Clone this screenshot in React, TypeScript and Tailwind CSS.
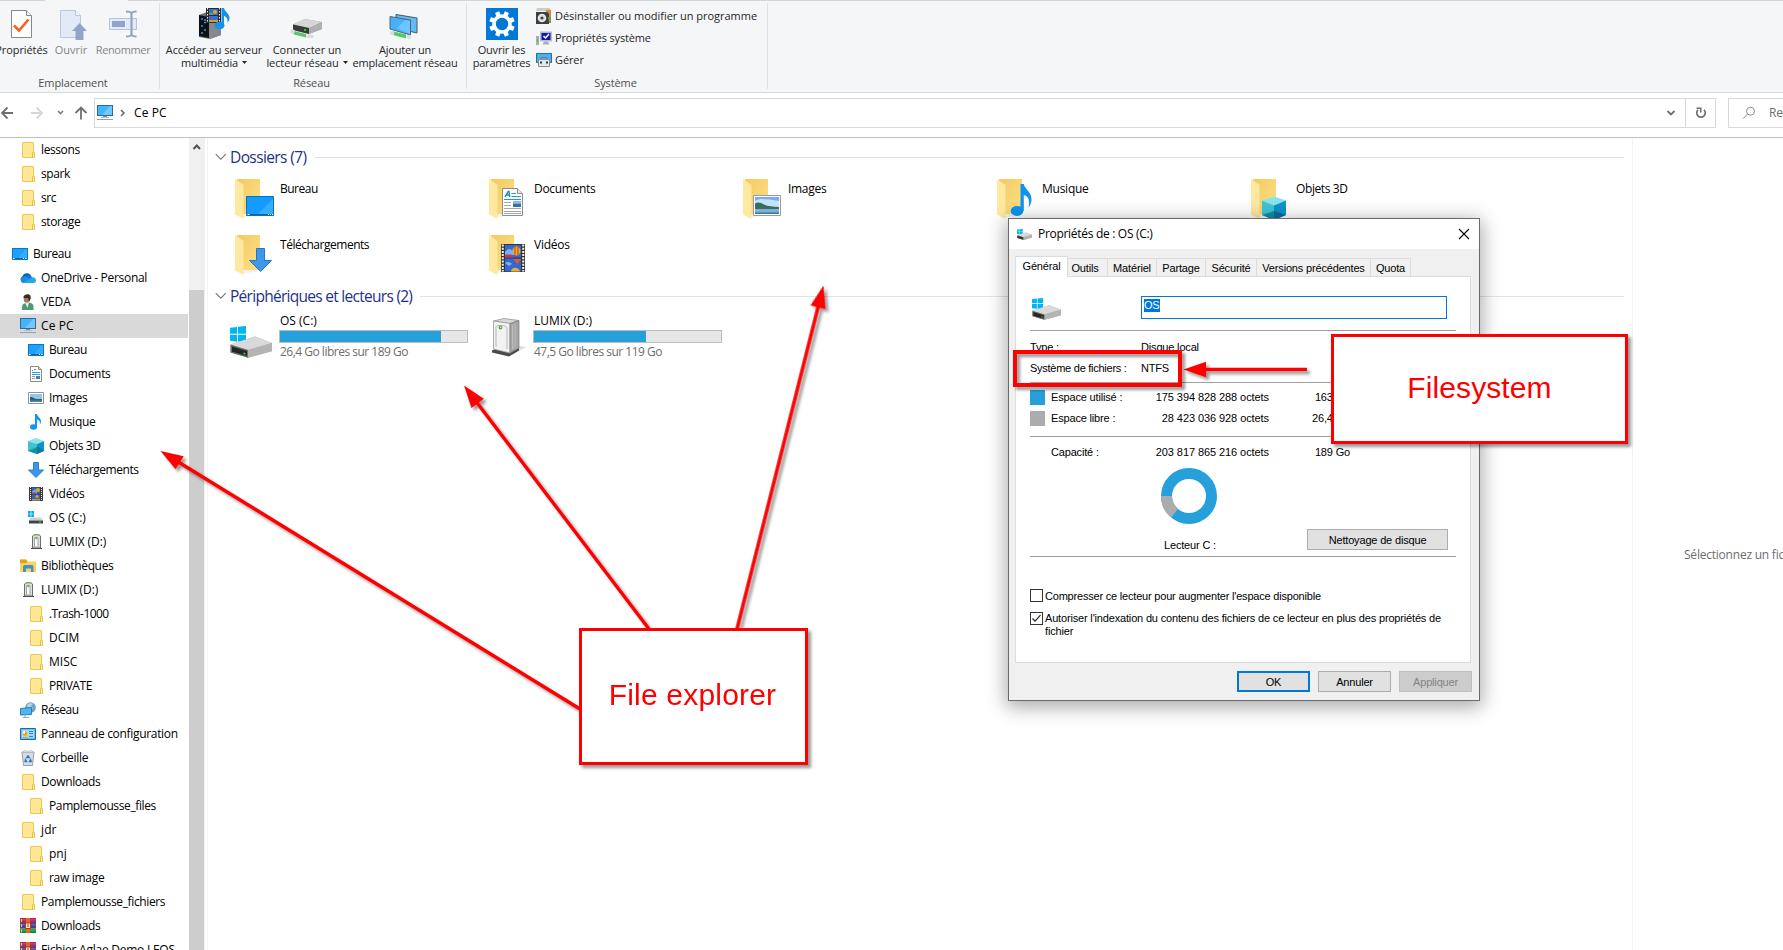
import type { ReactNode } from 'react';

/* ---------- small (16px) icons ---------- */

const Svg16 = ({ children }: { children: ReactNode }) => (
  <svg width="16" height="16" viewBox="0 0 16 16" className="shrink-0">{children}</svg>
);

const FolderIcon = () => (
  <Svg16>
    <path d="M2.5.5h11v10h1v5h-12z" fill="#ffe795" stroke="#eac757" />
    <path d="M12.5 15.5v-4.5l1-1" fill="none" stroke="#e5bd45" />
  </Svg16>
);

const DesktopIcon = () => (
  <Svg16>
    <rect x=".5" y="2.5" width="15" height="11" fill="#1aa0ff" stroke="#0b77bd" />
    <path d="M6 12 14 3h1v9z" fill="#36adff" />
    <path d="M1 12.5h14" stroke="#0a69ad" />
    <path d="M1 12.5h1.5M11 12.5h1M13 12.5h1.5" stroke="#fff" />
  </Svg16>
);

const CloudIcon = () => (
  <Svg16>
    <path d="M3.5 12.5A3.4 3.4 0 0 1 2.3 6.2 5 5 0 0 1 11 5.4l-5 7z" fill="#0364b8" />
    <path d="M4.5 6.5C7 4.500 10.500 5 12 7.200l2 3-9 2z" fill="#0f78d4" />
    <path d="M3.400 13A3.300 3.300 0 0 1 3.500 6.500c1.500-.3 3 .2 4 .8l6 3.700-1.500 2z" fill="#1490df" />
    <path d="M3.500 13 10.800 8.200A3 3 0 0 1 16 10.400 2.600 2.600 0 0 1 13.500 13z" fill="#28a8ea" />
  </Svg16>
);

const UserIcon = () => (
  <Svg16>
    <path d="M2 16V13c0-2 1-3.600 4-4l3-.5c3 .5 4.500 2 4.500 4V16z" fill="#4f9a74" />
    <path d="M5 8.500 7.500 14 9 8.500z" fill="#e9efe9" />
    <ellipse cx="6.700" cy="5" rx="3" ry="3.800" fill="#a8775a" />
    <path d="M3.500 3C4 0 9.500-.8 10.500 2c.6 2 0 4-1.300 5.500L8 4 3.500 4z" fill="#3b2b26" />
  </Svg16>
);

const PcIcon = () => (
  <Svg16>
    <rect x=".5" y=".5" width="15" height="10" fill="#45b4ff" stroke="#2a6e96" />
    <path d="M5 10 13 1h2v9z" fill="#72c8ff" />
    <path d="M6 11.500h4" stroke="#8a9299" />
    <path d="M4 12.500h8" stroke="#b4bcc3" />
    <path d="M0 14.500h16" stroke="#8fa3b3" />
  </Svg16>
);

const DocIcon = () => (
  <Svg16>
    <path d="M2.500.5h8l3 3v12h-11z" fill="#fff" stroke="#8b8b8b" />
    <path d="M10.500.5v3h3" fill="#ddd" stroke="#8b8b8b" />
    <path d="M4 6.500h8M4 4.500h1M6 3.500h2M4 8.500h8" stroke="#3199dd" />
    <path d="M4 10.500h3M4 12.500h3" stroke="#999" />
    <path d="M8 10h4v3H8z" fill="#4b7fae" />
  </Svg16>
);

const ImageIcon = () => (
  <Svg16>
    <path d="M.5 2.500h15v11H.5z" fill="#fff" stroke="#929292" />
    <path d="M2 4h12v8H2z" fill="#8fc6f2" />
    <path d="M2 7c3-.5 4 2 8 2h4v3H2z" fill="#2f6560" />
    <path d="M2 10.500h12V12H2z" fill="#4a86b6" />
  </Svg16>
);

const MusicIcon = () => (
  <Svg16>
    <ellipse cx="5.500" cy="13" rx="3.500" ry="2.800" fill="#0d96f2" />
    <path d="M7 0h2c.3 3 4.500 4 4 8-.2 1.200-.7 2-1.300 2.600C12.500 7.500 11 6 9 5.500V13H7z" fill="#0d96f2" />
  </Svg16>
);

const CubeIcon = () => (
  <Svg16>
    <path d="M0 3 8 0l8 3-7 3z" fill="#8fe3ea" />
    <path d="M0 3l9 3v10l-9-3z" fill="#45c0cf" />
    <path d="M9 6l7-3v10l-7 3z" fill="#0b94cc" />
    <path d="M0 13l9-4v7z" fill="#0e93a8" />
    <path d="M9 16l7-3-7-5z" fill="#10799f" />
  </Svg16>
);

const DownIcon = () => (
  <Svg16>
    <path d="M5.500.5h5v7.500h5L8 15.500.5 8h5z" fill="#3b97ea" stroke="#2b7fcf" />
  </Svg16>
);

const FilmIcon = () => (
  <Svg16>
    <path d="M1 1h14v14H1z" fill="#3b3b3b" />
    <path d="M2.500 1v14M13.500 1v14" stroke="#e2e2e2" strokeDasharray="1 1" />
    <path d="M4 1.500h8v6H4zM4 8.500h8v6H4z" fill="#2f62c4" />
    <path d="M4 5.500 7 3l2 2v2.500H4z" fill="#72a2e8" />
    <circle cx="10" cy="4" r="2" fill="#e3a321" />
    <path d="M4 6.500h4v1H4z" fill="#c0392b" />
    <circle cx="9" cy="10.500" r="1.500" fill="#e3a321" />
    <path d="M4 13h8v1.500H4z" fill="#c99a2b" />
  </Svg16>
);

const SmallDriveIcon = () => (
  <Svg16>
    <path d="M0 1h2.700v2.700H0zM3.300 1H6v2.700H3.300zM0 4.300h2.700V7H0zM3.300 4.300H6V7H3.300z" fill="#00adef" />
    <path d="M3 7.500h10l2 3H1z" fill="#cfcfcf" />
    <path d="M1 10.500h14v3H1z" fill="#3e4347" />
    <path d="M11 12h2" stroke="#3fe04a" />
  </Svg16>
);

const UsbIcon = () => (
  <Svg16>
    <path d="M4.500 2 6 .8h5L12.500 2v12h-8z" fill="#dedede" stroke="#6d6d6d" />
    <path d="M6.500 3.500h3.500V13H6.500z" fill="#fafafa" stroke="#999" strokeWidth=".8" />
    <circle cx="8.300" cy="4" r="1.300" fill="#6ac04b" />
    <path d="M3 14.500h11" stroke="#4c4c4c" />
  </Svg16>
);

const LibraryIcon = () => (
  <Svg16>
    <path d="M0 1.500h6l1.500 2H16V14H0z" fill="#ffd155" />
    <path d="M0 1.500h6l1.500 2L6 5H0z" fill="#dda017" />
    <path d="M3 14V8.500L4 7h8.500l1 1.500V14H11v-3.500H6V14z" fill="#3c93d8" />
  </Svg16>
);

const NetworkIcon = () => (
  <Svg16>
    <circle cx="10.500" cy="5.500" r="5.300" fill="#6aa3bf" />
    <path d="M7 3c2-2.500 5-2 6-1l-2 2 2 2-2 3-3-1z" fill="#b5d5e2" />
    <path d="M.5 6.500 11.500 5.500v7l-11 .5z" fill="#4db7f7" stroke="#2f7ba9" />
    <path d="M5 13.500v1.500M3 15.500h6" stroke="#8fa3b3" />
  </Svg16>
);

const PanelIcon = () => (
  <Svg16>
    <path d="M.5 2.500h15v11H.5z" fill="#63bff5" stroke="#1c6a9e" />
    <path d="M2 4h12v8H2z" fill="#a3dafa" />
    <circle cx="5" cy="7.500" r="2.500" fill="#fff" />
    <path d="M5 7.500V5a2.500 2.500 0 1 1-2.500 2.500z" fill="#f0a020" />
    <path d="M9 5.500h4M9 7.500h4M9 10.500h4" stroke="#2b85c4" />
    <path d="M3 11.500h5" stroke="#f0a020" />
  </Svg16>
);

const BinIcon = () => (
  <Svg16>
    <path d="M2 2h12l-1.500 13.500h-9z" fill="#d9dcdf" stroke="#9aa0a5" />
    <path d="M2.500 2 5 .5l3 .8L11 .4 13.500 2z" fill="#f4f4f4" stroke="#b5b5b5" strokeWidth=".6" />
    <path d="m8 5 2 3H6zM5.300 8.500l2 3.500H4.600zM10.700 8.500l1 3.500H8.800z" fill="#2474c6" stroke="#2474c6" strokeWidth=".5" />
  </Svg16>
);

const RarIcon = () => (
  <Svg16>
    <path d="M0 0h16v5H0z" fill="#a52c58" />
    <path d="M0 1h16v1.500H0z" fill="#d23a72" />
    <path d="M0 5h16v5.500H0z" fill="#3e4696" />
    <path d="M0 6h16v1.500H0z" fill="#5c66bb" />
    <path d="M0 10.500h16V15H0z" fill="#1f8a35" />
    <path d="M0 11.500h16V13H0z" fill="#38ab4c" />
    <path d="M6 0h4v15H6z" fill="#e0691f" />
    <path d="M5.500 5h5v5.500h-5z" fill="#f5e8df" stroke="#b83010" />
    <path d="M7.500 6h1v3h-1z" fill="#b83010" />
    <path d="M1.500 1v3M1.500 6v3M1.500 11.500v3" stroke="#e7c94b" />
  </Svg16>
);

/* ---------- ribbon icons ---------- */

const PropertiesIcon = () => (
  <svg width="32" height="32" viewBox="0 0 32 32" className="-translate-x-px">
    <path d="M6.500 2.500h15l5 5v22h-20z" fill="#fff" stroke="#878787" />
    <path d="M21.500 2.500v5h5" fill="#f0f0f0" stroke="#878787" />
    <path d="m9 17.500 5 5 9.500-11" fill="none" stroke="#f3641c" strokeWidth="2.600" />
  </svg>
);

const OpenIcon = () => (
  <svg width="32" height="32" viewBox="0 0 32 32">
    <path d="M5.500 2.500h15l5 5v22h-20z" fill="#e3eaf7" stroke="#bac7de" />
    <path d="M20.500 2.500v5h5" fill="#f2f6fc" stroke="#bac7de" />
    <path d="m24.500 15 7.500 8h-3.500v9h-8v-9H17z" fill="#93a5c4" />
  </svg>
);

const RenameIcon = () => (
  <svg width="32" height="32" viewBox="0 0 32 32">
    <path d="M2.500 10.500h27v11h-27z" fill="#e4ebf8" stroke="#b4c3de" />
    <path d="M5 13h13v6H5z" fill="#93a5c4" />
    <path d="M19 3.500c3 0 5 .5 5.500 2 .5-1.500 2-2 5-2M24.500 5v22M19 28.500c3 0 5-.5 5.500-2 .5 1.500 2 2 5 2" fill="none" stroke="#93a5c4" strokeWidth="2.200" />
  </svg>
);

const MediaServerIcon = () => (
  <svg width="32" height="32" viewBox="0 0 32 32">
    <path d="M1 7 9 4l14 3v20l-11 4L1 29z" fill="#6c7076" />
    <path d="M1 7l10 2v21L1 28z" fill="#111" />
    <path d="M11 9l12-2v20l-12 4z" fill="#85888e" />
    <path d="M3 11h2M6 14.500h2M3 18h2M6 22h2M3 25h2M6 12h2" stroke="#2f8dff" strokeWidth="1.500" />
    <path d="M8 0h15v15H8z" fill="#2c2c2c" />
    <path d="M9.500 0v15M21.500 0v15" stroke="#eee" strokeDasharray="1.500 1.500" />
    <path d="M11 1h9v6h-9zM11 8h9v6h-9z" fill="#3d6cd0" />
    <circle cx="17" cy="4" r="2" fill="#e4a72a" />
    <path d="M11 5h4v2h-4z" fill="#4caf50" />
    <path d="M11 12h9v2h-9z" fill="#c9a02b" />
    <ellipse cx="21.500" cy="17.500" rx="5" ry="3.800" fill="#1592e8" />
    <path d="M23.500 0h2.500c.5 4 5.500 5 5.500 10 0 2-1 3.500-2 4.500.5-4-1.500-6-3.500-6.500V17h-2.500z" fill="#1592e8" />
  </svg>
);

const NetDriveIcon = () => (
  <svg width="32" height="32" viewBox="0 0 32 32" className="-translate-x-px">
    <path d="M3 16.500 15 11l17 3v7l-13 5-16-4z" fill="#9a9a9a" />
    <path d="M3 16.500 15 11l17 3-13 6z" fill="#d6d6d6" />
    <path d="M3 16.500 19 20v6L3 22z" fill="#3a3a3a" />
    <path d="M19 20l13-5.500V21l-13 5z" fill="#b0b0b0" />
    <path d="M14 22h2" stroke="#46e04a" strokeWidth="1.500" />
    <path d="M2 22.500 16 26v3.500L4 26.500z" fill="#58c96b" />
    <circle cx="2.500" cy="23.500" r="2.200" fill="#dcdcdc" />
    <circle cx="18.500" cy="28" r="2.300" fill="#dedede" />
    <circle cx="22" cy="28.500" r="1.500" fill="#d5d5d5" />
  </svg>
);

const NetPlaceIcon = () => (
  <svg width="32" height="32" viewBox="0 0 32 32" className="-translate-x-px">
    <path d="M8 6.500 29 10v15L8 20z" fill="#5dbbf5" stroke="#4a5a64" />
    <path d="M2 8.500 22.500 12v15L2 21z" fill="#48b0fb" stroke="#55656f" />
    <path d="M9 20 17 12l5 1v13z" fill="#6cc5ff" />
    <path d="M4 23 18 26.500v4L5 27z" fill="#58c96b" />
    <circle cx="4" cy="25" r="2.300" fill="#dcdcdc" />
    <circle cx="21" cy="29" r="2.300" fill="#dedede" />
  </svg>
);

const GearTile = () => (
  <svg width="32" height="32" viewBox="0 0 32 32">
    <rect width="32" height="32" fill="#0078d7" />
    <circle cx="16" cy="16" r="8" fill="none" stroke="#fff" strokeWidth="3.600" />
    <g stroke="#fff" strokeWidth="4.400">
      <path d="M16 3.200v4M16 24.800v4M3.200 16h4M24.800 16h4" transform="rotate(22.500 16 16)" />
      <path d="M16 3.200v4M16 24.800v4M3.200 16h4M24.800 16h4" transform="rotate(67.500 16 16)" />
    </g>
  </svg>
);

const UninstallIcon = () => (
  <Svg16>
    <path d="M1 0h13l1 3H0z" fill="#c9cec6" />
    <path d="M10 2h5v12h-5z" fill="#d9883f" />
    <path d="M0 4h11l2 2v10H0z" fill="#3c3f3c" />
    <circle cx="6" cy="10" r="4.300" fill="#e3e3e3" />
    <circle cx="6" cy="10" r="1.600" fill="#3c3f3c" />
    <path d="M12 9h3v6h-2z" fill="#7a9c56" />
  </Svg16>
);

const SystemIcon = () => (
  <Svg16>
    <path d="M0 6h3v9H0z" fill="#a9aeb3" />
    <path d="M1.500 9v3" stroke="#4bc04b" />
    <path d="M4 1.500h12v10H4z" fill="#b9bdc4" />
    <path d="M5.500 3h9v7h-9z" fill="#1018b8" />
    <path d="m7.500 6 2 2 3.500-4" fill="none" stroke="#fff" strokeWidth="1.500" />
    <path d="M8 11.500h4l1.500 3h-7z" fill="#a9aeb3" />
  </Svg16>
);

const ManageIcon = () => (
  <Svg16>
    <path d="M.5 1.500h15v9H.5z" fill="#43b2f8" stroke="#2a6e96" />
    <path d="M5.500 7V5.500h5V7" fill="none" stroke="#777" />
    <path d="M2.500 7.500h11v7h-11z" fill="#e6e6e6" stroke="#8d8d8d" />
    <path d="M4 9.500h2v2H4zM10 9.500h2v2h-2z" fill="#333" />
  </Svg16>
);

/* ---------- large icons ---------- */

const overlays: Record<string, ReactNode> = {
  desktop: (
    <g>
      <path d="M11.500 17.500h27v19h-27z" fill="#129cff" stroke="#0b6fb5" />
      <path d="M22 36 38 20v16z" fill="#35adff" />
      <path d="M12 35.500h26" stroke="#0a5f9e" />
      <path d="M12.500 35.500h2M33 35.500h1M35 35.500h1M37 35.500h1" stroke="#fff" />
    </g>
  ),
  documents: (
    <g>
      <path d="M13.500 9.500h15l5 5v22h-20z" fill="#fff" stroke="#8d8d8d" />
      <path d="M28.500 9.500v5h5" fill="#e8e8e8" stroke="#8d8d8d" />
      <path d="M16 18l3.200-5.500h.8l.8 5.500M17.500 16h3" fill="none" stroke="#1b7fc6" strokeWidth="1.300" />
      <path d="M22.500 14.500h4.500M22.500 17.500H32M15 20.500h17" stroke="#1b9be0" />
      <path d="M15 23.500h7M15 26.500h7M15 29.500h17M15 32.500h17M15 34.500h17" stroke="#a6a6a6" />
      <path d="M24 22.500h8v5.500h-8z" fill="#3f6f9c" />
      <path d="M24 22.500h8v2.200h-8z" fill="#8ec3ef" />
    </g>
  ),
  images: (
    <g>
      <path d="M10.500 16.500h27v20h-27z" fill="#fff" stroke="#9a9a9a" />
      <path d="M12 18h24v17H12z" fill="#6fb0f5" />
      <path d="M12 22c4-3 12-2 24 0v6H12z" fill="#c5e2fa" />
      <path d="M12 24.500c3-2 6-.5 9 1 4 2 9 2 15 2.500v2H12z" fill="#356f5d" />
      <path d="M12 30h24v5H12z" fill="#7fb0d6" />
      <path d="M12 33.500h24V35H12z" fill="#3c74ac" />
    </g>
  ),
  music: (
    <g>
      <ellipse cx="20" cy="32" rx="6.300" ry="5" fill="#0b95f0" />
      <path d="M23.500 5h3.300c.7 5 8.200 8 7.700 16-.2 3-1.500 5.500-3 7.500C33.500 21 31 17 26.800 16v16h-3.300z" fill="#0b95f0" />
    </g>
  ),
  cube: (
    <g>
      <path d="M11 21.500 23 17.500l12 4-12 5z" fill="#8be3ea" />
      <path d="M11 21.500l12 5V41l-12-5z" fill="#3fc4d3" />
      <path d="M23 26.500l12-5V36l-12 5z" fill="#0b94cc" />
      <path d="M11 36l12-4v9z" fill="#0f8fa5" />
      <path d="M23 32l12 4-12 5z" fill="#0d6f94" />
    </g>
  ),
  download: <path d="M21.500 13.500h8v12h7L25.500 36.500 14.500 25.500h7z" fill="#3b98ea" stroke="#2377c6" />,
  film: (
    <g>
      <path d="M12 9h24v28H12z" fill="#343434" />
      <path d="M13.800 9.500v27M34.200 9.500v27" stroke="#f2f2f2" strokeWidth="2" strokeDasharray="2 1.200" />
      <path d="M16 10h16v12.500H16zM16 23.500h16V36.500H16z" fill="#3568cf" />
      <path d="M16 17c4-5 6-3 9 0v3h-9z" fill="#7fb0f0" />
      <path d="M16 19.500h6.500l2 3H16z" fill="#c4385a" />
      <ellipse cx="27.500" cy="16" rx="4" ry="4.500" fill="#e9b02b" />
      <path d="M26 12v8M29 12v8" stroke="#c9301e" />
      <path d="M24 24h8l-3.500 5z" fill="#e0592b" />
      <path d="M16 28c2-2 5-1 7 1l-3 2z" fill="#7fb0f0" />
      <path d="M22 36.500c0-5 8-5 9 0z" fill="#e9b02b" />
    </g>
  ),
};

const BigFolder = ({ kind }: { kind: string }) => (
  <svg width="40" height="41" viewBox="0 0 40 41" className="shrink-0">
    <defs>
      <linearGradient id={`back-${kind}`} x1="0" x2="1" y1="0" y2="1">
        <stop offset="0" stopColor="#f1cb63" />
        <stop offset="1" stopColor="#ffde85" />
      </linearGradient>
    </defs>
    <path d="M2 0h23v35H2z" fill={`url(#back-${kind})`} />
    <path d="M8 38l14-1 3-2H8z" fill="#f1f1f1" />
    <path d="M0 0l8.500 6v34L0 35.500z" fill="#ffe8a0" />
    {overlays[kind]}
  </svg>
);

const DriveIcon = ({ width, height }: { width: number; height: number }) => (
  <svg width={width} height={height} viewBox="0 0 42 32" preserveAspectRatio="none" className="shrink-0">
    <path d="M0 1.800 7 .9v6.900H0zM8 .8 16 0v7.800H8zM0 8.800h7v6.900L0 14.800zM8 8.800h8v7.700l-8-.9z" fill="#00b6f0" />
    <path d="M.5 18.500 25 10.500 42 17v8L18 31.800.5 26.500z" fill="#a8a8a8" />
    <path d="M.5 18.500 25 10.500 42 17l-24 7z" fill="#d9d9d9" />
    <path d="M18 24l24-7v8.200L18 31.800z" fill="#b4b4b4" />
    <path d="M.5 18.500 18 24v7.800L.5 26.500z" fill="#6e6e6e" />
    <path d="M2 20.500 17 25v5L2 25.800z" fill="#262626" />
    <path d="M13.500 26.500l2 .6v1.400l-2-.6z" fill="#3fe04a" />
  </svg>
);

const TowerIcon = () => (
  <svg width="34" height="39" viewBox="0 0 34 39" className="shrink-0">
    <path d="M20 37 34 29l-7-1z" fill="#dcdcdc" />
    <path d="M0 32.500 3 31l14 3.500 10-5v3L17 38.500 0 34.500z" fill="#4a4a4a" />
    <path d="M1.500 3 12 .5 27 2.500 18 5.500z" fill="#d9d9d9" stroke="#8a8a8a" strokeWidth=".7" />
    <path d="M1.500 3 18 5.500V35L1.500 31z" fill="#f3f3f3" stroke="#9b9b9b" strokeWidth=".8" />
    <path d="M18 5.500l9-3V30l-9 5z" fill="#a6a6a6" stroke="#7d7d7d" strokeWidth=".7" />
    <path d="M20.500 7v24M23 6v23.500" stroke="#c4c4c4" strokeWidth=".8" />
    <path d="M4 29V9c0-2.500 11-2 11 1v21" fill="none" stroke="#b5b5b5" />
    <circle cx="8.500" cy="9.500" r="1.900" fill="#57a83c" />
    <circle cx="8.700" cy="9.200" r=".7" fill="#fff" />
  </svg>
);

/* ---------- ribbon ---------- */

const RibbonButton = ({ icon, lines, className, caret }: { icon: ReactNode; lines: string[]; className: string; caret?: boolean }) => (
  <div className={`flex shrink-0 flex-col items-center whitespace-nowrap ${className}`}>
    {icon}
    <div className="mt-[3px] flex flex-col items-center leading-[13px]">
      {lines.map((l, i) => (
        <span key={l} className="flex items-center">
          {l}
          {caret && i === lines.length - 1 && (
            <svg width="5" height="3" viewBox="0 0 5 3" className="ml-1"><path d="M0 0h5L2.500 3z" fill="#262626" /></svg>
          )}
        </span>
      ))}
    </div>
  </div>
);

const GroupLabel = ({ children, className = '' }: { children: string; className?: string }) => (
  <div className={`mt-auto -mb-px text-center leading-[14px] tracking-[-0.1px] text-[#4f4f4f] ${className}`}>{children}</div>
);

const commands: [ReactNode, string, string][] = [
  [<UninstallIcon />, 'Désinstaller ou modifier un programme', 'tracking-[-0.03px]'],
  [<SystemIcon />, 'Propriétés système', 'tracking-[-0.150px]'],
  [<ManageIcon />, 'Gérer', 'tracking-[-0.1px]'],
];

const Ribbon = () => (
  <header className="flex h-[93px] shrink-0 flex-col border-b border-[#d5d7d9] bg-[#f5f6f8] text-[11px] text-[#262626]">
    <div className="flex h-px">
      <div className="w-[45px] bg-[#d3d5d7]" />
      <div className="w-[83px]" />
      <div className="flex-1 bg-[#d3d5d7]" />
    </div>
    <div className="mt-[2px] mb-[3px] flex flex-1">
      <section className="flex w-[160px] flex-col border-r border-[#e0e1e3] pt-[5px]">
        <div className="-ml-[6px] flex">
          <RibbonButton icon={<PropertiesIcon />} lines={['Propriétés']} className="w-[55px] tracking-[-0.08px]" />
          <RibbonButton icon={<OpenIcon />} lines={['Ouvrir']} className="w-[44px] text-[#858585]" />
          <RibbonButton icon={<RenameIcon />} lines={['Renommer']} className="w-[60px] tracking-[-0.35px] text-[#858585]" />
        </div>
        <GroupLabel className="pr-[13px]">Emplacement</GroupLabel>
      </section>
      <section className="flex w-[307px] flex-col border-r border-[#e0e1e3] pt-[5px]">
        <div className="flex">
          <RibbonButton icon={<MediaServerIcon />} lines={['Accéder au serveur', 'multimédia']} className="w-[108px] tracking-[-0.12px]" caret />
          <RibbonButton icon={<NetDriveIcon />} lines={['Connecter un', 'lecteur réseau']} className="w-[78px] tracking-[-0.08px]" caret />
          <RibbonButton icon={<NetPlaceIcon />} lines={['Ajouter un', 'emplacement réseau']} className="w-[118px] tracking-[-0.18px]" />
        </div>
        <GroupLabel className="pr-[3px]">Réseau</GroupLabel>
      </section>
      <section className="flex w-[301px] flex-col border-r border-[#e0e1e3] pt-[5px]">
        <div className="flex">
          <RibbonButton icon={<GearTile />} lines={['Ouvrir les', 'paramètres']} className="w-[69px] tracking-[-0.2px]" />
          <div className="-mt-[3px] flex flex-col">
            {commands.map(([icon, t, tracking]) => (
              <div key={t} className={`flex h-[22px] items-center gap-[3px] whitespace-nowrap ${tracking}`}>{icon}<span>{t}</span></div>
            ))}
          </div>
        </div>
        <GroupLabel className="pr-[3px]">Système</GroupLabel>
      </section>
    </div>
  </header>
);

/* ---------- address bar ---------- */

const AddressBar = () => (
  <nav className="flex h-[45px] shrink-0 items-start overflow-hidden border-b border-[#bfbfbf] bg-white pt-[5px]">
    <svg width="94" height="30" viewBox="0 0 94 30" fill="none" className="shrink-0">
      <path d="M13 15H2.500M7.500 9.500 2 15l5.500 5.500" stroke="#6f6f6f" strokeWidth="1.800" />
      <path d="M31 15h10.500M36.500 9.500 42 15l-5.500 5.500" stroke="#d6d6d6" strokeWidth="1.800" />
      <path d="m58 13 2.500 2.500L63 13" stroke="#7b7b7b" strokeWidth="1.600" />
      <path d="M81 21.500V10M75.500 15 81 9.500l5.500 5.500" stroke="#6f6f6f" strokeWidth="1.800" />
    </svg>
    <div className="flex h-[30px] w-[1622px] shrink-0 items-center border border-[#d9d9d9] pl-[2px] text-[12px]">
      <PcIcon />
      <svg width="6" height="10" viewBox="0 0 6 10" className="ml-[7px]" fill="none"><path d="M1 2l3 3-3 3" stroke="#666" strokeWidth="1.500" /></svg>
      <span className="ml-[8px] tracking-[0.1px]">Ce PC</span>
      <svg width="12" height="8" viewBox="0 0 12 8" className="mr-[8px] ml-auto" fill="none"><path d="m2.500 2 3.500 3.500L9.500 2" stroke="#6f6f6f" strokeWidth="1.800" /></svg>
      <div className="flex h-full w-[30px] items-center justify-center border-l border-[#d9d9d9]">
        <svg width="14" height="14" viewBox="0 0 14 14" fill="none">
          <path d="M10 3.800a4.300 4.300 0 1 1-6 0" stroke="#6f6f6f" strokeWidth="1.700" />
          <path d="M2.500 2.200h4.300v4.300" stroke="#6f6f6f" strokeWidth="1.500" />
        </svg>
      </div>
    </div>
    <div className="ml-[12px] flex h-[30px] w-[300px] shrink-0 items-center border border-[#d9d9d9] text-[12px] text-[#6d6d6d]">
      <svg width="14" height="14" viewBox="0 0 14 14" className="ml-[13px]" fill="none">
        <circle cx="8.500" cy="5.200" r="4" stroke="#8b8b8b" />
        <path d="M5.500 8 1.200 12.500" stroke="#8b8b8b" />
      </svg>
      <span className="ml-[13px] tracking-[-0.25px] whitespace-nowrap">Rechercher</span>
    </div>
  </nav>
);

/* ---------- navigation tree ---------- */

type Node = [ReactNode, string, number, string?];

const quick: Node[] = ['lessons', 'spark', 'src', 'storage'].map((n): Node => [<FolderIcon />, n, 1, 'tracking-[-0.4px]']);

const tree: Node[] = [
  [<DesktopIcon />, 'Bureau', 0, 'tracking-[-0.5px]'],
  [<CloudIcon />, 'OneDrive - Personal', 1],
  [<UserIcon />, 'VEDA', 1, 'tracking-[-0.1px]'],
  [<PcIcon />, 'Ce PC', 1, 'tracking-[0.1px]'],
  [<DesktopIcon />, 'Bureau', 2, 'tracking-[-0.5px]'],
  [<DocIcon />, 'Documents', 2],
  [<ImageIcon />, 'Images', 2, 'tracking-[-0.3px]'],
  [<MusicIcon />, 'Musique', 2, 'tracking-[-0.25px]'],
  [<CubeIcon />, 'Objets 3D', 2, 'tracking-[-0.4px]'],
  [<DownIcon />, 'Téléchargements', 2, 'tracking-[-0.45px]'],
  [<FilmIcon />, 'Vidéos', 2, 'tracking-[-0.3px]'],
  [<SmallDriveIcon />, 'OS (C:)', 2, 'tracking-[0px]'],
  [<UsbIcon />, 'LUMIX (D:)', 2, 'tracking-[-0.1px]'],
  [<LibraryIcon />, 'Bibliothèques', 1, 'tracking-[-0.35px]'],
  [<UsbIcon />, 'LUMIX (D:)', 1, 'tracking-[-0.1px]'],
  [<FolderIcon />, '.Trash-1000', 2, 'tracking-[-0.55px]'],
  [<FolderIcon />, 'DCIM', 2, 'tracking-[0px]'],
  [<FolderIcon />, 'MISC', 2, 'tracking-[0px]'],
  [<FolderIcon />, 'PRIVATE', 2, 'tracking-[-0.45px]'],
  [<NetworkIcon />, 'Réseau', 1, 'tracking-[-0.5px]'],
  [<PanelIcon />, 'Panneau de configuration', 1, 'tracking-[-0.32px]'],
  [<BinIcon />, 'Corbeille', 1, 'tracking-[-0.25px]'],
  [<FolderIcon />, 'Downloads', 1, 'tracking-[-0.35px]'],
  [<FolderIcon />, 'Pamplemousse_files', 2, 'tracking-[-0.38px]'],
  [<FolderIcon />, 'jdr', 1, 'tracking-[0.1px]'],
  [<FolderIcon />, 'pnj', 2, 'tracking-[0px]'],
  [<FolderIcon />, 'raw image', 2],
  [<FolderIcon />, 'Pamplemousse_fichiers', 1, 'tracking-[-0.36px]'],
  [<RarIcon />, 'Downloads', 1, 'tracking-[-0.35px]'],
  [<RarIcon />, 'Fichier Aglae Demo LEOS', 1, 'tracking-[-0.25px]'],
];

const indents = ['pl-[12px]', 'pl-[20px]', 'pl-[28px]'];

const TreeRow = ({ node: [icon, name, level, tracking], selected }: { node: Node; selected?: boolean }) => (
  <div className={`flex h-6 w-[188px] shrink-0 items-center gap-[5px] whitespace-nowrap ${indents[level]} ${selected ? 'bg-[#d9d9d9]' : ''}`}>
    {icon}
    <span className={tracking ?? 'tracking-[-0.3px]'}>{name}</span>
  </div>
);

const Sidebar = () => (
  <aside className="flex w-[208px] shrink-0 overflow-hidden border-r border-[#f3f3f3] text-[12px] text-black">
    <div className="flex w-[189px] flex-col">
      {quick.map((n) => <TreeRow key={n[1]} node={n} />)}
      <div className="h-2 shrink-0" />
      {tree.map((n, i) => <TreeRow key={i} node={n} selected={i === 3} />)}
    </div>
    <div className="flex w-4 flex-col bg-[#f0f0f0]">
      <svg width="16" height="17" viewBox="0 0 16 17" fill="none"><path d="m4.500 11 3.300-3.500L11 11" stroke="#505050" strokeWidth="2" /></svg>
      <div className="mt-[135px] w-[15px] flex-1 bg-[#cdcdcd]" />
    </div>
  </aside>
);

/* ---------- main content ---------- */

const SectionHeader = ({ title, className }: { title: string; className: string }) => (
  <div className="mr-[8px] ml-[7px] flex h-6 items-center">
    <svg width="12" height="8" viewBox="0 0 12 8" fill="none"><path d="M.8 1.200 5.800 6.200l5-5" stroke="#777" strokeWidth="1.100" /></svg>
    <h2 className={`ml-[3px] pt-px text-[15.500px] whitespace-nowrap text-[#1e3287] ${className}`}>{title}</h2>
    <div className="ml-[8px] h-px flex-1 bg-[#e2e2e2]" />
  </div>
);

const folders: [string, string, string][] = [
  ['desktop', 'Bureau', 'tracking-[-0.5px]'],
  ['documents', 'Documents', 'tracking-[-0.32px]'],
  ['images', 'Images', 'tracking-[-0.3px]'],
  ['music', 'Musique', 'tracking-[-0.25px]'],
  ['cube', 'Objets 3D', 'tracking-[-0.4px]'],
  ['download', 'Téléchargements', 'tracking-[-0.48px]'],
  ['film', 'Vidéos', 'tracking-[-0.25px]'],
];

const Drive = ({ icon, name, info, fill }: { icon: ReactNode; name: string; info: string; fill: string }) => (
  <div className="flex w-[254px]">
    <div className="flex w-[49px] pt-[15px]">{icon}</div>
    <div className="w-[189px] pt-[2px]">
      <div className="pl-px leading-[16px]">{name}</div>
      <div className="mt-px h-[13px] border border-[#bcbcbc] bg-[#e6e6e6]">
        <div className={`h-full bg-[#26a0da] ${fill}`} />
      </div>
      <div className="mt-px pl-px leading-[16px] tracking-[-0.5px] whitespace-nowrap text-[#6d6d6d]">{info}</div>
    </div>
  </div>
);

const Content = () => (
  <main className="flex-1 pt-[7px] text-[12px] text-black">
    <SectionHeader title="Dossiers (7)" className="tracking-[-0.600px]" />
    <div className="mt-[3px] grid grid-cols-[repeat(5,254px)] pl-[27px]">
      {folders.map(([kind, name, tracking]) => (
        <div key={kind} className="flex h-[56px] gap-[5px] pt-[7px]">
          <BigFolder kind={kind} />
          <span className={`pt-[2px] leading-[16px] ${tracking}`}>{name}</span>
        </div>
      ))}
    </div>
    <SectionHeader title="Périphériques et lecteurs (2)" className="tracking-[-0.720px]" />
    <div className="mt-[3px] flex pl-[22px]">
      <Drive icon={<DriveIcon width={42} height={32} />} name="OS (C:)" info="26,4 Go libres sur 189 Go" fill="w-[161px]" />
      <Drive icon={<div className="-mt-[8px] pl-[8px]"><TowerIcon /></div>} name="LUMIX (D:)" info="47,5 Go libres sur 119 Go" fill="w-[112px]" />
    </div>
  </main>
);

const Preview = () => (
  <aside className="w-[151px] shrink-0 overflow-hidden border-l border-[#f3f3f3] pt-[408px] pl-[51px] text-[12px] leading-[18px] tracking-[-0.22px] whitespace-nowrap text-[#6d6d6d]">
    Sélectionnez un fichier à afficher.
  </aside>
);

/* ---------- properties dialog ---------- */

const tabs: [string, string][] = [
  ['Outils', 'w-[40px] pr-[5px]'],
  ['Matériel', 'w-[49px]'],
  ['Partage', 'w-[49px]'],
  ['Sécurité', 'w-[51px]'],
  ['Versions précédentes', 'w-[114px]'],
  ['Quota', 'w-[40px]'],
];

const Rule = ({ className }: { className: string }) => <div className={`h-px w-[426px] shrink-0 bg-[#a0a0a0] ${className}`} />;

const SizeRow = ({ swatch, label, bytes, size, className }: { swatch: string; label: string; bytes: string; size: string; className: string }) => (
  <div className={`flex h-[15px] items-center ${className}`}>
    <div className={`mr-[6px] h-[15px] w-[15px] ${swatch}`} />
    <span className="w-[90px]">{label}</span>
    <span className="w-[128px] text-right tracking-[-0.08px]">{bytes}</span>
    <span className="w-[81px] text-right">{size}</span>
  </div>
);

const Dialog = () => (
  <div className="absolute top-[218px] left-[1008px] flex h-[483px] w-[472px] flex-col border border-[#6a6a6a] bg-[#f0f0f0] text-[11px] tracking-[-0.17px] text-black shadow-[0_4px_18px_2px_rgba(0,0,0,0.34)] [font-family:'Liberation_Sans',Arial,sans-serif]">
    <div className="flex h-[30px] shrink-0 items-center bg-white pl-[8px] text-[12px] [font-family:'Open_Sans','Noto_Sans',sans-serif]">
      <DriveIcon width={15} height={11} />
      <span className="ml-[6px] tracking-[-0.3px]">Propriétés de : OS (C:)</span>
      <svg width="12" height="12" viewBox="0 0 12 12" className="mr-[9px] ml-auto"><path d="m1 1 10 10M11 1 1 11" stroke="#000" strokeWidth="1.100" /></svg>
    </div>
    <div className="flex h-[27px] shrink-0 items-end pl-[6px]">
      <div className="z-10 -mb-px flex h-[21px] w-[53px] justify-center border border-b-0 border-[#dcdcdc] bg-white pt-[2px] leading-[14px]">Général</div>
      {tabs.map(([t, c]) => (
        <div key={t} className={`flex h-[18px] items-center justify-center border-t border-r border-[#dcdcdc] pt-[2px] whitespace-nowrap ${c}`}>{t}</div>
      ))}
    </div>
    <div className="mr-[8px] ml-[6px] flex h-[387px] shrink-0 flex-col border border-[#dcdcdc] bg-white pt-[19px] pl-[14px]">
      <div className="flex h-[23px] shrink-0">
        <div className="w-[111px] pt-[2px] pl-[2px]"><DriveIcon width={29} height={22} /></div>
        <div className="h-[23px] w-[306px] border border-[#0078d7] pt-[2px] pl-[2px]">
          <span className="block h-[13px] w-[16px] bg-[#0078d7] leading-[13px] tracking-[-0.4px] text-white">OS</span>
        </div>
      </div>
      <Rule className="mt-[11px]" />
      <div className="mt-[9px] flex h-[15px] items-center"><span className="w-[111px]">Type :</span><span>Disque local</span></div>
      <div className="mt-[6px] flex h-[14px] items-center"><span className="w-[111px] tracking-[-0.26px]">Système de fichiers :</span><span>NTFS</span></div>
      <Rule className="mt-[7px]" />
      <SizeRow className="mt-[7px]" swatch="bg-[#26a0da]" label="Espace utilisé :" bytes="175 394 828 288 octets" size="163 Go" />
      <SizeRow className="mt-[6px]" swatch="bg-[#acacac]" label="Espace libre :" bytes="28 423 036 928 octets" size="26,4 Go" />
      <Rule className="mt-[10px]" />
      <SizeRow className="mt-[8px]" swatch="" label="Capacité :" bytes="203 817 865 216 octets" size="189 Go" />
      <svg width="56" height="56" viewBox="0 0 56 56" className="mt-[8px] ml-[131px] shrink-0" fill="none" strokeWidth="11">
        <circle cx="28" cy="28" r="22.500" stroke="#26a0da" />
        <path d="M13.540 45.240A22.500 22.500 0 0 1 5.500 28" stroke="#acacac" />
      </svg>
      <div className="mt-[5px] flex h-[21px] shrink-0">
        <span className="ml-[134px] w-[143px] pt-[9px] leading-[14px]">Lecteur C :</span>
        <button className="h-[21px] w-[141px] border border-[#adadad] bg-[#e1e1e1] pt-px">Nettoyage de disque</button>
      </div>
      <Rule className="mt-[6px]" />
      <div className="mt-[32px] flex h-[13px] shrink-0 items-center">
        <div className="h-[13px] w-[13px] border border-[#333]" />
        <span className="ml-[2px] pt-px tracking-[-0.2px]">Compresser ce lecteur pour augmenter l'espace disponible</span>
      </div>
      <div className="mt-[10px] flex shrink-0">
        <div className="h-[13px] w-[13px] border border-[#333]">
          <svg width="11" height="11" viewBox="0 0 11 11" fill="none"><path d="m1.500 5.500 2.500 2.700 5.500-6" stroke="#222" strokeWidth="1.200" /></svg>
        </div>
        <span className="ml-[2px] w-[405px] leading-[13px] tracking-[-0.17px]">Autoriser l'indexation du contenu des fichiers de ce lecteur en plus des propriétés de<br />fichier</span>
      </div>
    </div>
    <div className="mt-[8px] mr-[7px] flex justify-end gap-[8px]">
      <button className="h-[21px] w-[73px] border-2 border-[#0078d7] bg-[#e1e1e1] pt-px leading-[16px]">OK</button>
      <button className="h-[21px] w-[73px] border border-[#adadad] bg-[#e1e1e1] pt-px">Annuler</button>
      <button className="h-[21px] w-[73px] border border-[#bfbfbf] bg-[#ccc] pt-px text-[#838383]">Appliquer</button>
    </div>
  </div>
);

/* ---------- annotations ---------- */

const arrows: [number, number, number, number][] = [
  [160.5, 451, 580, 709],
  [464, 385.5, 649, 629],
  [823.5, 285.5, 737, 629],
  [1183.5, 369.5, 1307, 369.5],
];

const Arrow = ({ x1, y1, x2, y2 }: { x1: number; y1: number; x2: number; y2: number }) => {
  const len = Math.hypot(x2 - x1, y2 - y1);
  const angle = (Math.atan2(y2 - y1, x2 - x1) * 180) / Math.PI;
  return (
    <g transform={`translate(${x1} ${y1}) rotate(${angle})`}>
      <path d="M0 0 22.500-7.700v15.400z" fill="#fe0000" />
      <path d={`M20 0H${len}`} stroke="#fe0000" strokeWidth="3.400" />
    </g>
  );
};

const Annotations = () => (
  <>
    <svg width="1783" height="950" viewBox="0 0 1783 950" className="pointer-events-none absolute top-0 left-0">
      <defs>
        <filter id="soft" filterUnits="userSpaceOnUse" x="0" y="0" width="1783" height="950">
          <feDropShadow dx="3" dy="3" stdDeviation="1.500" floodColor="#000" floodOpacity=".4" />
        </filter>
      </defs>
      <g filter="url(#soft)">
        {arrows.map(([x1, y1, x2, y2]) => <Arrow key={x1} x1={x1} y1={y1} x2={x2} y2={y2} />)}
      </g>
    </svg>
    <div className="absolute top-[350px] left-[1013px] h-[37px] w-[169px] border-4 border-[#fe0000] drop-shadow-[3px_3px_1.500px_rgba(0,0,0,0.4)]" />
    <div className="absolute top-[334px] left-[1331px] flex h-[110px] w-[297px] items-center justify-center border-[3px] border-[#fe0000] bg-white pb-[3px] text-[30px] leading-none tracking-[0.1px] text-[#fe0000] shadow-[3px_3px_3px_rgba(0,0,0,0.4)] [font-family:'Liberation_Sans',Arial,sans-serif]">Filesystem</div>
    <div className="absolute top-[628px] left-[579px] flex h-[137px] w-[229px] items-center justify-center border-[3px] border-[#fe0000] bg-white pr-[2px] pb-[4px] text-[30px] leading-none tracking-[0.2px] text-[#fe0000] shadow-[3px_3px_3px_rgba(0,0,0,0.4)] [font-family:'Liberation_Sans',Arial,sans-serif]">File explorer</div>
  </>
);

export default function App() {
  return (
    <div className="relative flex h-[950px] w-full flex-col overflow-hidden bg-white [font-family:'Open_Sans','Noto_Sans',sans-serif]">
      <Ribbon />
      <AddressBar />
      <div className="flex min-h-0 flex-1">
        <Sidebar />
        <Content />
        <Preview />
      </div>
      <Dialog />
      <Annotations />
    </div>
  );
}
